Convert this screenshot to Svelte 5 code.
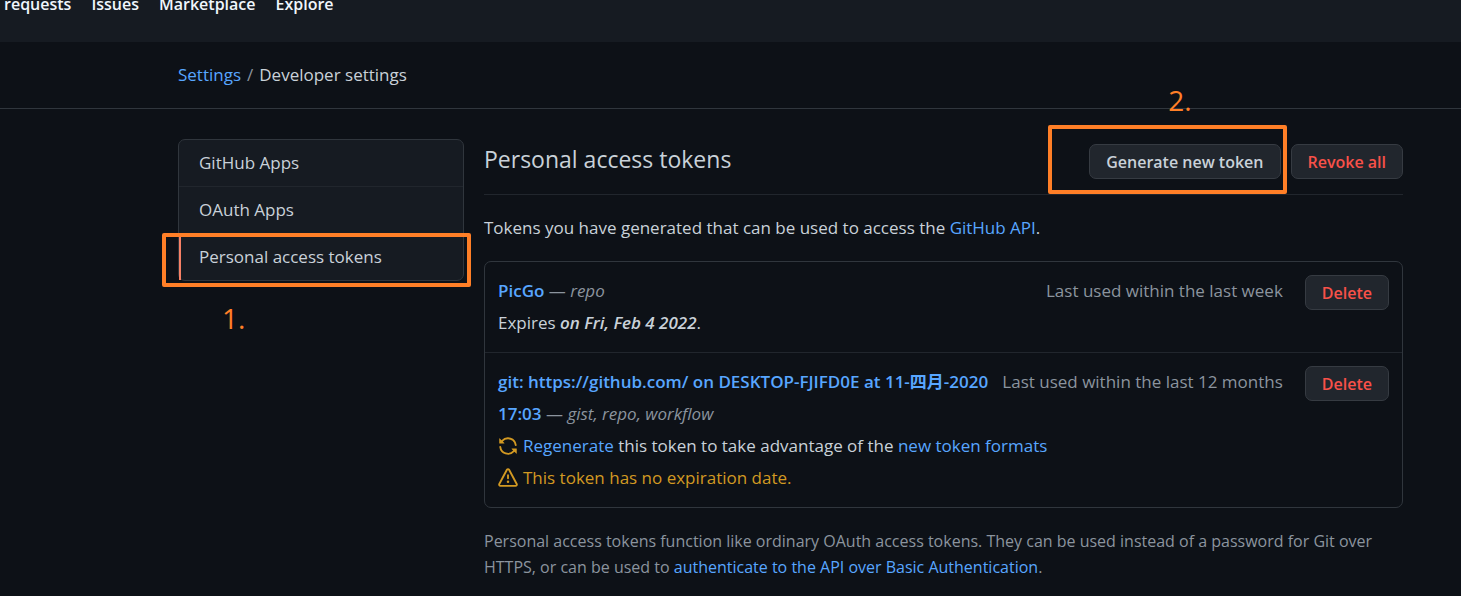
<script>
  const topLinks = ['requests', 'Issues', 'Marketplace', 'Explore'];
  const sections = [
    { label: 'GitHub Apps' },
    { label: 'OAuth Apps' },
    { label: 'Personal access tokens', current: true },
  ];
</script>

<div class="page">
  <header class="topbar">
    <nav aria-label="Global">
      {#each topLinks as link}
        <a href="#top">{link}</a>
      {/each}
    </nav>
  </header>

  <nav class="crumbs" aria-label="Breadcrumb">
    <a href="#settings">Settings</a><span class="slash">/</span><span>Developer settings</span>
  </nav>

  <div class="layout">
    <aside>
      <nav class="menu" aria-label="Developer settings">
        {#each sections as s}
          <a href="#section" class:current={s.current} aria-current={s.current ? 'page' : undefined}>
            {s.label}
            {#if s.current}
              <span class="frame frame-menu"></span>
              <span class="step step-one">1.</span>
            {/if}
          </a>
        {/each}
      </nav>
    </aside>

    <main>
      <div class="heading">
        <h2>Personal access tokens</h2>
        <div class="buttons">
          <div class="marked">
            <button type="button">Generate new token</button>
            <span class="frame frame-button"></span>
            <span class="step step-two">2.</span>
          </div>
          <button type="button" class="danger">Revoke all</button>
        </div>
      </div>

      <p class="intro">
        Tokens you have generated that can be used to access the <a href="#api">GitHub API</a>.
      </p>

      <ul class="tokens">
        <li>
          <div class="actions">
            <span>Last used within the last week</span>
            <button type="button" class="danger">Delete</button>
          </div>
          <div class="line">
            <a class="name" href="#token">PicGo</a> <span class="scopes">— <em>repo</em></span>
          </div>
          <div class="line">Expires <em class="date">on Fri, Feb 4 2022</em>.</div>
        </li>
        <li>
          <div class="actions">
            <span>Last used within the last 12 months</span>
            <button type="button" class="danger">Delete</button>
          </div>
          <div class="line">
            <a class="name" href="#token">git: https://github.com/ on DESKTOP-FJIFD0E at 11-四月-2020 17:03</a>
            <span class="scopes">— <em>gist, repo, workflow</em></span>
          </div>
          <div class="line icon-line">
            <svg viewBox="0 0 16 16" aria-hidden="true"><path fill-rule="evenodd" d="M8 2.5a5.487 5.487 0 00-4.131 1.869l1.204 1.204A.25.25 0 014.896 6H1.25A.25.25 0 011 5.75V2.104a.25.25 0 01.427-.177l1.38 1.38A7.001 7.001 0 0114.95 7.16a.75.75 0 11-1.49.178A5.501 5.501 0 008 2.5zM1.705 8.005a.75.75 0 01.834.656 5.501 5.501 0 009.592 2.97l-1.204-1.204a.25.25 0 01.177-.427h3.646a.25.25 0 01.25.25v3.646a.25.25 0 01-.427.177l-1.38-1.38A7.001 7.001 0 011.05 8.84a.75.75 0 01.656-.834z" /></svg>
            <span><a href="#regenerate">Regenerate</a> this token to take advantage of the <a href="#formats">new token formats</a></span>
          </div>
          <div class="line icon-line warning">
            <svg viewBox="0 0 16 16" aria-hidden="true"><path fill-rule="evenodd" d="M8.22 1.754a.25.25 0 00-.44 0L1.698 13.132a.25.25 0 00.22.368h12.164a.25.25 0 00.22-.368L8.22 1.754zm-1.763-.707c.659-1.234 2.427-1.234 3.086 0l6.082 11.378A1.75 1.75 0 0114.082 15H1.918a1.75 1.75 0 01-1.543-2.575L6.457 1.047zM9 11a1 1 0 11-2 0 1 1 0 012 0zm-.25-5.25a.75.75 0 00-1.5 0v2.5a.75.75 0 001.5 0v-2.5z" /></svg>
            <span>This token has no expiration date.</span>
          </div>
        </li>
      </ul>

      <p class="note">
        Personal access tokens function like ordinary OAuth access tokens. They can be used instead of a password for Git over HTTPS, or can be used to <a href="#auth">authenticate to the API over Basic Authentication</a>.
      </p>
    </main>
  </div>
</div>

<style>
  :global(body) {
    margin: 0;
    background: #0d1117;
  }
  .page {
    box-sizing: border-box;
    min-height: 100vh;
    overflow: hidden;
    border-bottom: 1px solid #05070a;
    background: #0d1117;
    color: #c9d1d9;
    font: 17px/26px "Open Sans", "Noto Sans CJK SC", sans-serif;
  }
  a {
    color: #58a6ff;
    text-decoration: none;
  }
  .topbar {
    height: 42px;
    background: #161b22;
  }
  .topbar nav {
    display: flex;
    gap: 20px;
    padding-left: 4px;
    margin-top: -9px;
    float: left;
    font-size: 16px;
  }
  .topbar a {
    color: #f0f6fc;
    font-weight: 600;
  }
  .crumbs {
    display: flex;
    gap: 6px;
    padding: 20px 58px 20px 178px;
    border-bottom: 1px solid #30363d;
  }
  .slash {
    color: #8b949e;
  }
  .layout {
    display: grid;
    grid-template-columns: 286px minmax(0, 1fr);
    gap: 20px;
    padding: 30px 58px 16px 178px;
  }
  .menu {
    border: 1px solid #30363d;
    border-radius: 7px;
    background: #161b22;
  }
  .menu a {
    display: block;
    position: relative;
    padding: 10px 20px;
    color: #c9d1d9;
  }
  .menu a + a {
    border-top: 1px solid #21262d;
  }
  .menu .current {
    box-shadow: inset 2px 0 #f78166;
  }
  .frame {
    position: absolute;
    box-sizing: border-box;
    border: 4px solid #ff7f27;
    border-radius: 2px;
    pointer-events: none;
  }
  .frame-menu {
    inset: -1px -8px -7px -17px;
  }
  .frame-button {
    inset: -19px -6px -15px -41px;
  }
  .step {
    position: absolute;
    color: #ff7f27;
    font-size: 28px;
    line-height: 32px;
    pointer-events: none;
  }
  .step-one {
    top: 68px;
    left: 43px;
  }
  .step-two {
    top: -60px;
    left: 79px;
  }
  .heading {
    display: flex;
    justify-content: space-between;
    align-items: flex-start;
    padding-bottom: 15px;
    border-bottom: 1px solid #21262d;
  }
  h2 {
    margin: 0;
    font-size: 23px;
    font-weight: 400;
    line-height: 40px;
  }
  .buttons {
    display: flex;
    gap: 10px;
    padding-top: 5px;
  }
  .marked {
    position: relative;
    display: flex;
  }
  button {
    box-sizing: border-box;
    height: 35px;
    padding: 0 16px;
    border: 1px solid #363b42;
    border-radius: 7px;
    background: #21262d;
    color: #c9d1d9;
    font: 600 16px/24px "Open Sans", sans-serif;
    white-space: nowrap;
  }
  .danger {
    color: #f85149;
  }
  .intro {
    margin: 20px 0;
  }
  .tokens {
    margin: 0;
    padding: 0;
    list-style: none;
    border: 1px solid #30363d;
    border-radius: 7px;
  }
  li {
    padding: 13px;
    line-height: 32px;
  }
  li + li {
    border-top: 1px solid #21262d;
  }
  .actions {
    float: right;
    display: flex;
    align-items: flex-start;
    gap: 22px;
    margin-left: 8px;
    color: #8b949e;
  }
  .name {
    font-weight: 600;
    word-break: keep-all;
  }
  .scopes {
    color: #8b949e;
  }
  .date {
    font-weight: 600;
  }
  .icon-line {
    display: flex;
    align-items: center;
    gap: 5px;
  }
  .icon-line svg {
    flex: none;
    width: 20px;
    height: 20px;
    fill: #d29922;
  }
  .warning {
    color: #d29922;
  }
  .note {
    margin: 20px 0 0;
    color: #8b949e;
    font-size: 16px;
  }
</style>
